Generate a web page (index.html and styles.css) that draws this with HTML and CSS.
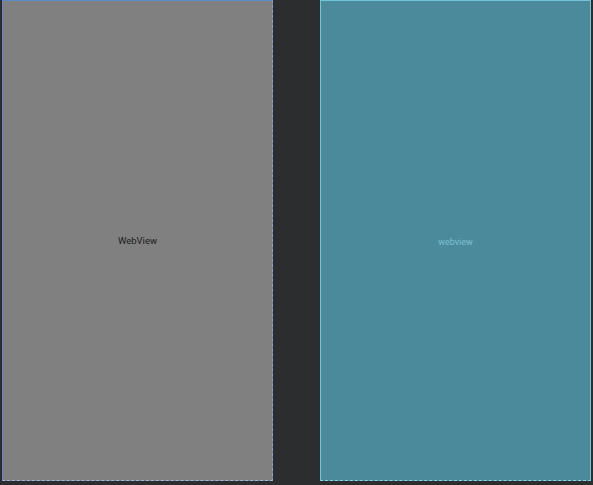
FILE: index.html
```html
<!DOCTYPE html>
<html>
<head>
<meta charset="utf-8">
<link rel="stylesheet" href="styles.css">
</head>
<body>
<div class="canvas">
  <div class="panel design"><span class="label">WebView</span></div>
  <div class="panel blueprint"><span class="label">webview</span></div>
</div>
</body>
</html>
```

FILE: styles.css
```css
html, body {
  margin: 0;
  padding: 0;
  background: #2b2d2e;
  width: 593px;
  height: 485px;
  overflow: hidden;
}
.canvas {
  display: flex;
  gap: 47px;
  padding: 0 0 0 2px;
  height: 481px;
  font-family: Roboto, "Liberation Sans", Arial, sans-serif;
}
.panel {
  box-sizing: border-box;
  height: 481px;
  display: flex;
  align-items: center;
  justify-content: center;
}
.design {
  width: 271px;
  background: #808080;
  border-left: 1px solid #5a8ccc;
  border-top: 1px solid #5a8ccc;
  border-right: 1px dashed #7fa6d6;
  border-bottom: 1px dashed #9ab8dc;
}
.design .label {
  font-size: 9.5px;
  color: #1c1c1c;
}
.blueprint {
  width: 271px;
  background: #4a8a9b;
  border: 1px solid #70c4dc;
  border-bottom: 1px dashed #8ed0e4;
}
.blueprint .label {
  font-size: 9px;
  color: #7cc0d4;
  padding-top: 2px;
}
```
